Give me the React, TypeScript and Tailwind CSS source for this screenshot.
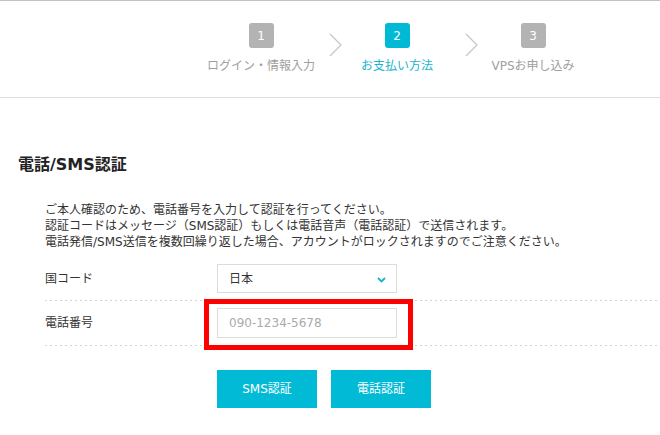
const font = { fontFamily: '"DejaVu Sans", "Noto Sans CJK JP", sans-serif' };

function Step({ n, label, active }: { n: number; label: string; active?: boolean }) {
  return (
    <div className="flex w-[110px] flex-col items-center">
      <div
        className={`flex h-[25px] w-[25px] items-center justify-center rounded-[3px] text-[12px] text-white ${
          active ? "bg-[#00b9d5]" : "bg-[#b3b3b3]"
        }`}
      >
        {n}
      </div>
      <div className={`mt-[9px] whitespace-nowrap text-[12px] leading-[18px] ${active ? "text-[#19b3cf]" : "text-[#a0a0a0]"}`}>
        {label}
      </div>
    </div>
  );
}

function Chevron() {
  return (
    <svg className="ml-[13px] mt-[10px] h-[24px] w-[13px] shrink-0" viewBox="0 0 13 24" fill="none">
      <path d="M1 1 L12 12 L1 23" stroke="#c4c4c4" strokeWidth="1.2" />
    </svg>
  );
}

function Dots() {
  return <div className="ml-[45px] h-px bg-[linear-gradient(to_right,#d4d4d4_50%,transparent_50%)] bg-[length:5px_1px]" />;
}

export default function App() {
  return (
    <div className="h-[435px] w-[660px] overflow-hidden bg-white text-[#333]" style={font}>
      <header className="flex h-[98px] border-t border-b border-t-[#c2c2c2] border-b-[#dcdcdc]">
        <div className="ml-[206px] flex pt-[22px]">
          <Step n={1} label="ログイン・情報入力" />
          <Chevron />
          <Step n={2} label="お支払い方法" active />
          <Chevron />
          <Step n={3} label="VPSお申し込み" />
        </div>
      </header>

      <main className="pt-[56px]">
        <h2 className="ml-[18px] text-[16px] font-bold leading-[21px] text-[#222]">電話/SMS認証</h2>

        <p className="ml-[45px] mt-[27px] text-[12px] leading-[16px]">
          ご本人確認のため、電話番号を入力して認証を行ってください。
          <br />
          認証コードはメッセージ（SMS認証）もしくは電話音声（電話認証）で送信されます。
          <br />
          電話発信/SMS送信を複数回繰り返した場合、アカウントがロックされますのでご注意ください。
        </p>

        <div className="mt-[7px]">
          <div className="flex items-center py-[7px] pl-[45px]">
            <div className="w-[172px] text-[12px]">国コード</div>
            <div className="flex h-[29px] w-[180px] items-center justify-between border border-[#dcdcdc] pl-[11px] pr-[10px] text-[12px]">
              <span>日本</span>
              <svg className="mt-[2px] h-[6px] w-[9px]" viewBox="0 0 9 6" fill="none">
                <path d="M1 1 L4.5 4.5 L8 1" stroke="#19b3cf" strokeWidth="1.8" />
              </svg>
            </div>
          </div>
          <Dots />
          <div className="flex items-center py-[7px] pl-[45px]">
            <div className="w-[172px] text-[12px]">電話番号</div>
            <div className="relative">
              <div className="flex h-[30px] w-[180px] items-center border border-[#dcdcdc] pl-[11px] text-[12px] text-[#aaa]">
                090-1234-5678
              </div>
              <div className="absolute -bottom-[12px] -left-[13px] -right-[16px] -top-[9px] border-[5px] border-[#ff0000]" />
            </div>
          </div>
          <Dots />
        </div>

        <div className="ml-[217px] mt-[24px] flex gap-[14px]">
          <button className="h-[38px] w-[100px] bg-[#00bad6] text-[12px] text-white">SMS認証</button>
          <button className="h-[38px] w-[100px] bg-[#00bad6] text-[12px] text-white">電話認証</button>
        </div>
      </main>
    </div>
  );
}
